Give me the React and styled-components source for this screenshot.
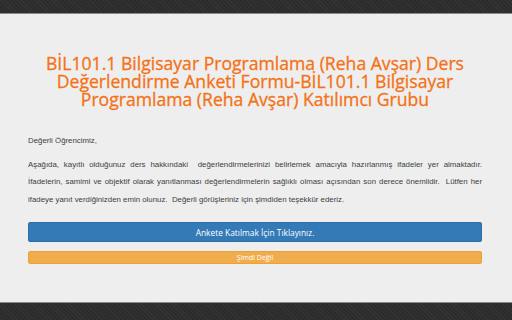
import styled, { createGlobalStyle } from "styled-components";

const GlobalStyle = createGlobalStyle`
  html, body {
    margin: 0;
    padding: 0;
    background: #eeeeee;
  }
`;

const Page = styled.div`
  width: 512px;
  height: 320px;
  display: flex;
  flex-direction: column;
  overflow: hidden;
`;

const DarkBar = styled.div`
  height: ${(p) => p.$h}px;
  flex-shrink: 0;
  background-color: #2c2c2c;
  background-image: repeating-linear-gradient(
    45deg,
    rgba(255, 255, 255, 0.04) 0 1px,
    transparent 1px 3px
  );
  border-${(p) => (p.$bottom ? "top" : "bottom")}: 1px solid #8a8a8a;
`;

const Content = styled.div`
  flex: 1;
  background: #eeeeee;
  padding: 40px 30px 0 28px;
`;

const Title = styled.h1`
  margin: 0 0 24px;
  text-align: center;
  font-family: "Open Sans", sans-serif;
  font-weight: 400;
  font-size: 17.6px;
  line-height: 18px;
  color: #f47216;
  -webkit-text-stroke: 0.3px #f47216;
`;

const Text = styled.div`
  margin: 0 0 ${(p) => p.$mb || 0}px;
  font-family: "Liberation Sans", Arial, sans-serif;
  font-size: 7.85px;
  line-height: 17.5px;
  color: #404040;
  white-space: nowrap;
`;

const Line = styled.span`
  display: block;
  text-align: justify;
  text-align-last: ${(p) => (p.$last ? "left" : "justify")};
  white-space: normal;
`;

const Button = styled.button`
  display: block;
  width: 100%;
  border: 1px solid ${(p) => p.$border};
  border-radius: 2px;
  background: ${(p) => p.$bg};
  color: #ffffff;
  font-family: "Open Sans", sans-serif;
  font-size: ${(p) => p.$fs}px;
  height: ${(p) => p.$h}px;
  padding: 0;
  margin-bottom: ${(p) => p.$mb || 0}px;
  cursor: pointer;
`;

export default function App() {
  return (
    <Page>
      <GlobalStyle />
      <DarkBar $h={13} />
      <Content>
        <Title>
          BİL101.1 Bilgisayar Programlama (Reha Avşar) Ders Değerlendirme Anketi
          Formu-BİL101.1 Bilgisayar Programlama (Reha Avşar) Katılımcı Grubu
        </Title>
        <Text $mb={6}>Değerli Öğrencimiz,</Text>
        <Text $mb={14}>
          <Line>
            Aşağıda, kayıtlı olduğunuz ders hakkındaki&nbsp; değerlendirmelerinizi
            belirlemek amacıyla hazırlanmış ifadeler yer almaktadır.
          </Line>
          <Line>
            İfadelerin, samimi ve objektif olarak yanıtlanması değerlendirmelerin
            sağlıklı olması açısından son derece önemlidir.&nbsp; Lütfen her
          </Line>
          <Line $last>
            ifadeye yanıt verdiğinizden emin olunuz.&nbsp; Değerli görüşleriniz
            için şimdiden teşekkür ederiz.
          </Line>
        </Text>
        <Button $bg="#337ab7" $border="#2e6da4" $fs={8.4} $h={20} $mb={9}>
          Ankete Katılmak İçin Tıklayınız.
        </Button>
        <Button $bg="#f0ad4e" $border="#eea236" $fs={7} $h={13}>
          Şimdi Değil
        </Button>
      </Content>
      <DarkBar $h={17} $bottom />
    </Page>
  );
}
